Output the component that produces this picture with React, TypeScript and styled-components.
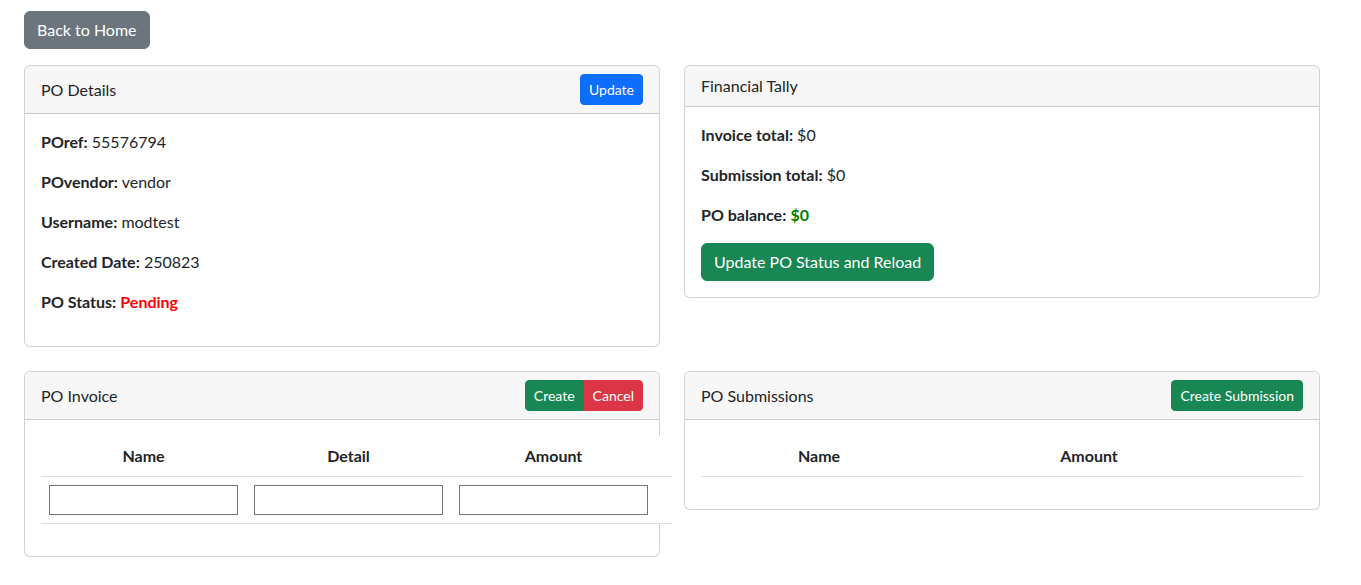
import React from "react";
import styled, { createGlobalStyle, css } from "styled-components";

const Global = createGlobalStyle`
  html, body { margin: 0; padding: 0; background: #fff; }
  body {
    font-family: Lato, "Open Sans", sans-serif;
    font-size: 16px;
    line-height: 1.5;
    color: #212529;
  }
  * { box-sizing: border-box; }
`;

const Page = styled.div`
  padding: 11px 24px 24px 24px;
`;

const variants: Record<string, string> = {
  secondary: "#6c757d",
  primary: "#0d6efd",
  success: "#198754",
  danger: "#dc3545",
};

const Button = styled.button<{ $variant: string; $small?: boolean; $group?: "first" | "last" }>`
  font-family: inherit;
  color: #fff;
  background: ${(p) => variants[p.$variant]};
  border: 1px solid ${(p) => variants[p.$variant]};
  cursor: pointer;
  display: inline-block;
  ${(p) =>
    p.$small
      ? css`
          padding: 4px 8px;
          font-size: 14px;
          line-height: 21px;
          border-radius: 4px;
        `
      : css`
          padding: 6px 12px;
          font-size: 16px;
          line-height: 24px;
          border-radius: 6px;
        `}
  ${(p) =>
    p.$group === "first" &&
    css`
      border-top-right-radius: 0;
      border-bottom-right-radius: 0;
    `}
  ${(p) =>
    p.$group === "last" &&
    css`
      border-top-left-radius: 0;
      border-bottom-left-radius: 0;
    `}
`;

const Grid = styled.div`
  display: grid;
  grid-template-columns: 636px 636px;
  column-gap: 24px;
  row-gap: 24px;
  align-items: start;
  margin-top: 16px;
`;

const Card = styled.div`
  border: 1px solid rgba(0, 0, 0, 0.175);
  border-radius: 6px;
  background: #fff;
`;

const CardHeader = styled.div`
  display: flex;
  align-items: center;
  justify-content: space-between;
  padding: 8px 16px;
  background: #f7f7f7;
  border-bottom: 1px solid rgba(0, 0, 0, 0.175);
  border-radius: 5px 5px 0 0;
`;

const Title = styled.span`
  font-size: 16px;
  line-height: 24px;
`;

const BtnGroup = styled.div`
  display: flex;
`;

const CardBody = styled.div`
  padding: 16px;
`;

const Line = styled.p`
  margin: 0 0 16px 0;
  line-height: 24px;
`;

const Value = styled.span<{ $tone?: "red" | "green" }>`
  ${(p) =>
    p.$tone &&
    css`
      font-weight: 700;
      color: ${p.$tone === "red" ? "#ff0000" : "#008000"};
    `}
`;

const Table = styled.table`
  width: 100%;
  border-collapse: collapse;
  margin-bottom: 16px;
`;

const Th = styled.th<{ $w?: number }>`
  padding: 8px;
  font-weight: 700;
  text-align: center;
  line-height: 24px;
  background: #fff;
  border-bottom: 1px solid #dee2e6;
  ${(p) => p.$w && css`width: ${p.$w}px;`}
`;

const Td = styled.td`
  padding: 8px;
  background: #fff;
  border-bottom: 1px solid #dee2e6;
`;

const Input = styled.input`
  display: block;
  width: 189px;
  height: 30px;
  border: 1px solid #767676;
  border-radius: 0;
  padding: 1px 2px;
  font-family: inherit;
  font-size: 13px;
`;

export default function App() {
  return (
    <>
      <Global />
      <Page>
        <Button $variant="secondary">Back to Home</Button>
        <Grid>
          <Card>
            <CardHeader>
              <Title>PO Details</Title>
              <Button $variant="primary" $small>Update</Button>
            </CardHeader>
            <CardBody>
              <Line><b>POref:</b> 55576794</Line>
              <Line><b>POvendor:</b> vendor</Line>
              <Line><b>Username:</b> modtest</Line>
              <Line><b>Created Date:</b> 250823</Line>
              <Line><b>PO Status:</b> <Value $tone="red">Pending</Value></Line>
            </CardBody>
          </Card>
          <Card>
            <CardHeader>
              <Title>Financial Tally</Title>
            </CardHeader>
            <CardBody>
              <Line><b>Invoice total:</b> $0</Line>
              <Line><b>Submission total:</b> $0</Line>
              <Line><b>PO balance:</b> <Value $tone="green">$0</Value></Line>
              <Button $variant="success">Update PO Status and Reload</Button>
            </CardBody>
          </Card>
          <Card>
            <CardHeader>
              <Title>PO Invoice</Title>
              <BtnGroup>
                <Button $variant="success" $small $group="first">Create</Button>
                <Button $variant="danger" $small $group="last">Cancel</Button>
              </BtnGroup>
            </CardHeader>
            <CardBody>
              <Table>
                <thead>
                  <tr>
                    <Th>Name</Th>
                    <Th>Detail</Th>
                    <Th>Amount</Th>
                    <Th></Th>
                  </tr>
                </thead>
                <tbody>
                  <tr>
                    <Td><Input type="text" /></Td>
                    <Td><Input type="text" /></Td>
                    <Td><Input type="text" /></Td>
                    <Td></Td>
                  </tr>
                </tbody>
              </Table>
            </CardBody>
          </Card>
          <Card>
            <CardHeader>
              <Title>PO Submissions</Title>
              <Button $variant="success" $small>Create Submission</Button>
            </CardHeader>
            <CardBody>
              <Table>
                <thead>
                  <tr>
                    <Th $w={236}>Name</Th>
                    <Th $w={304}>Amount</Th>
                    <Th></Th>
                  </tr>
                </thead>
                <tbody></tbody>
              </Table>
            </CardBody>
          </Card>
        </Grid>
      </Page>
    </>
  );
}
